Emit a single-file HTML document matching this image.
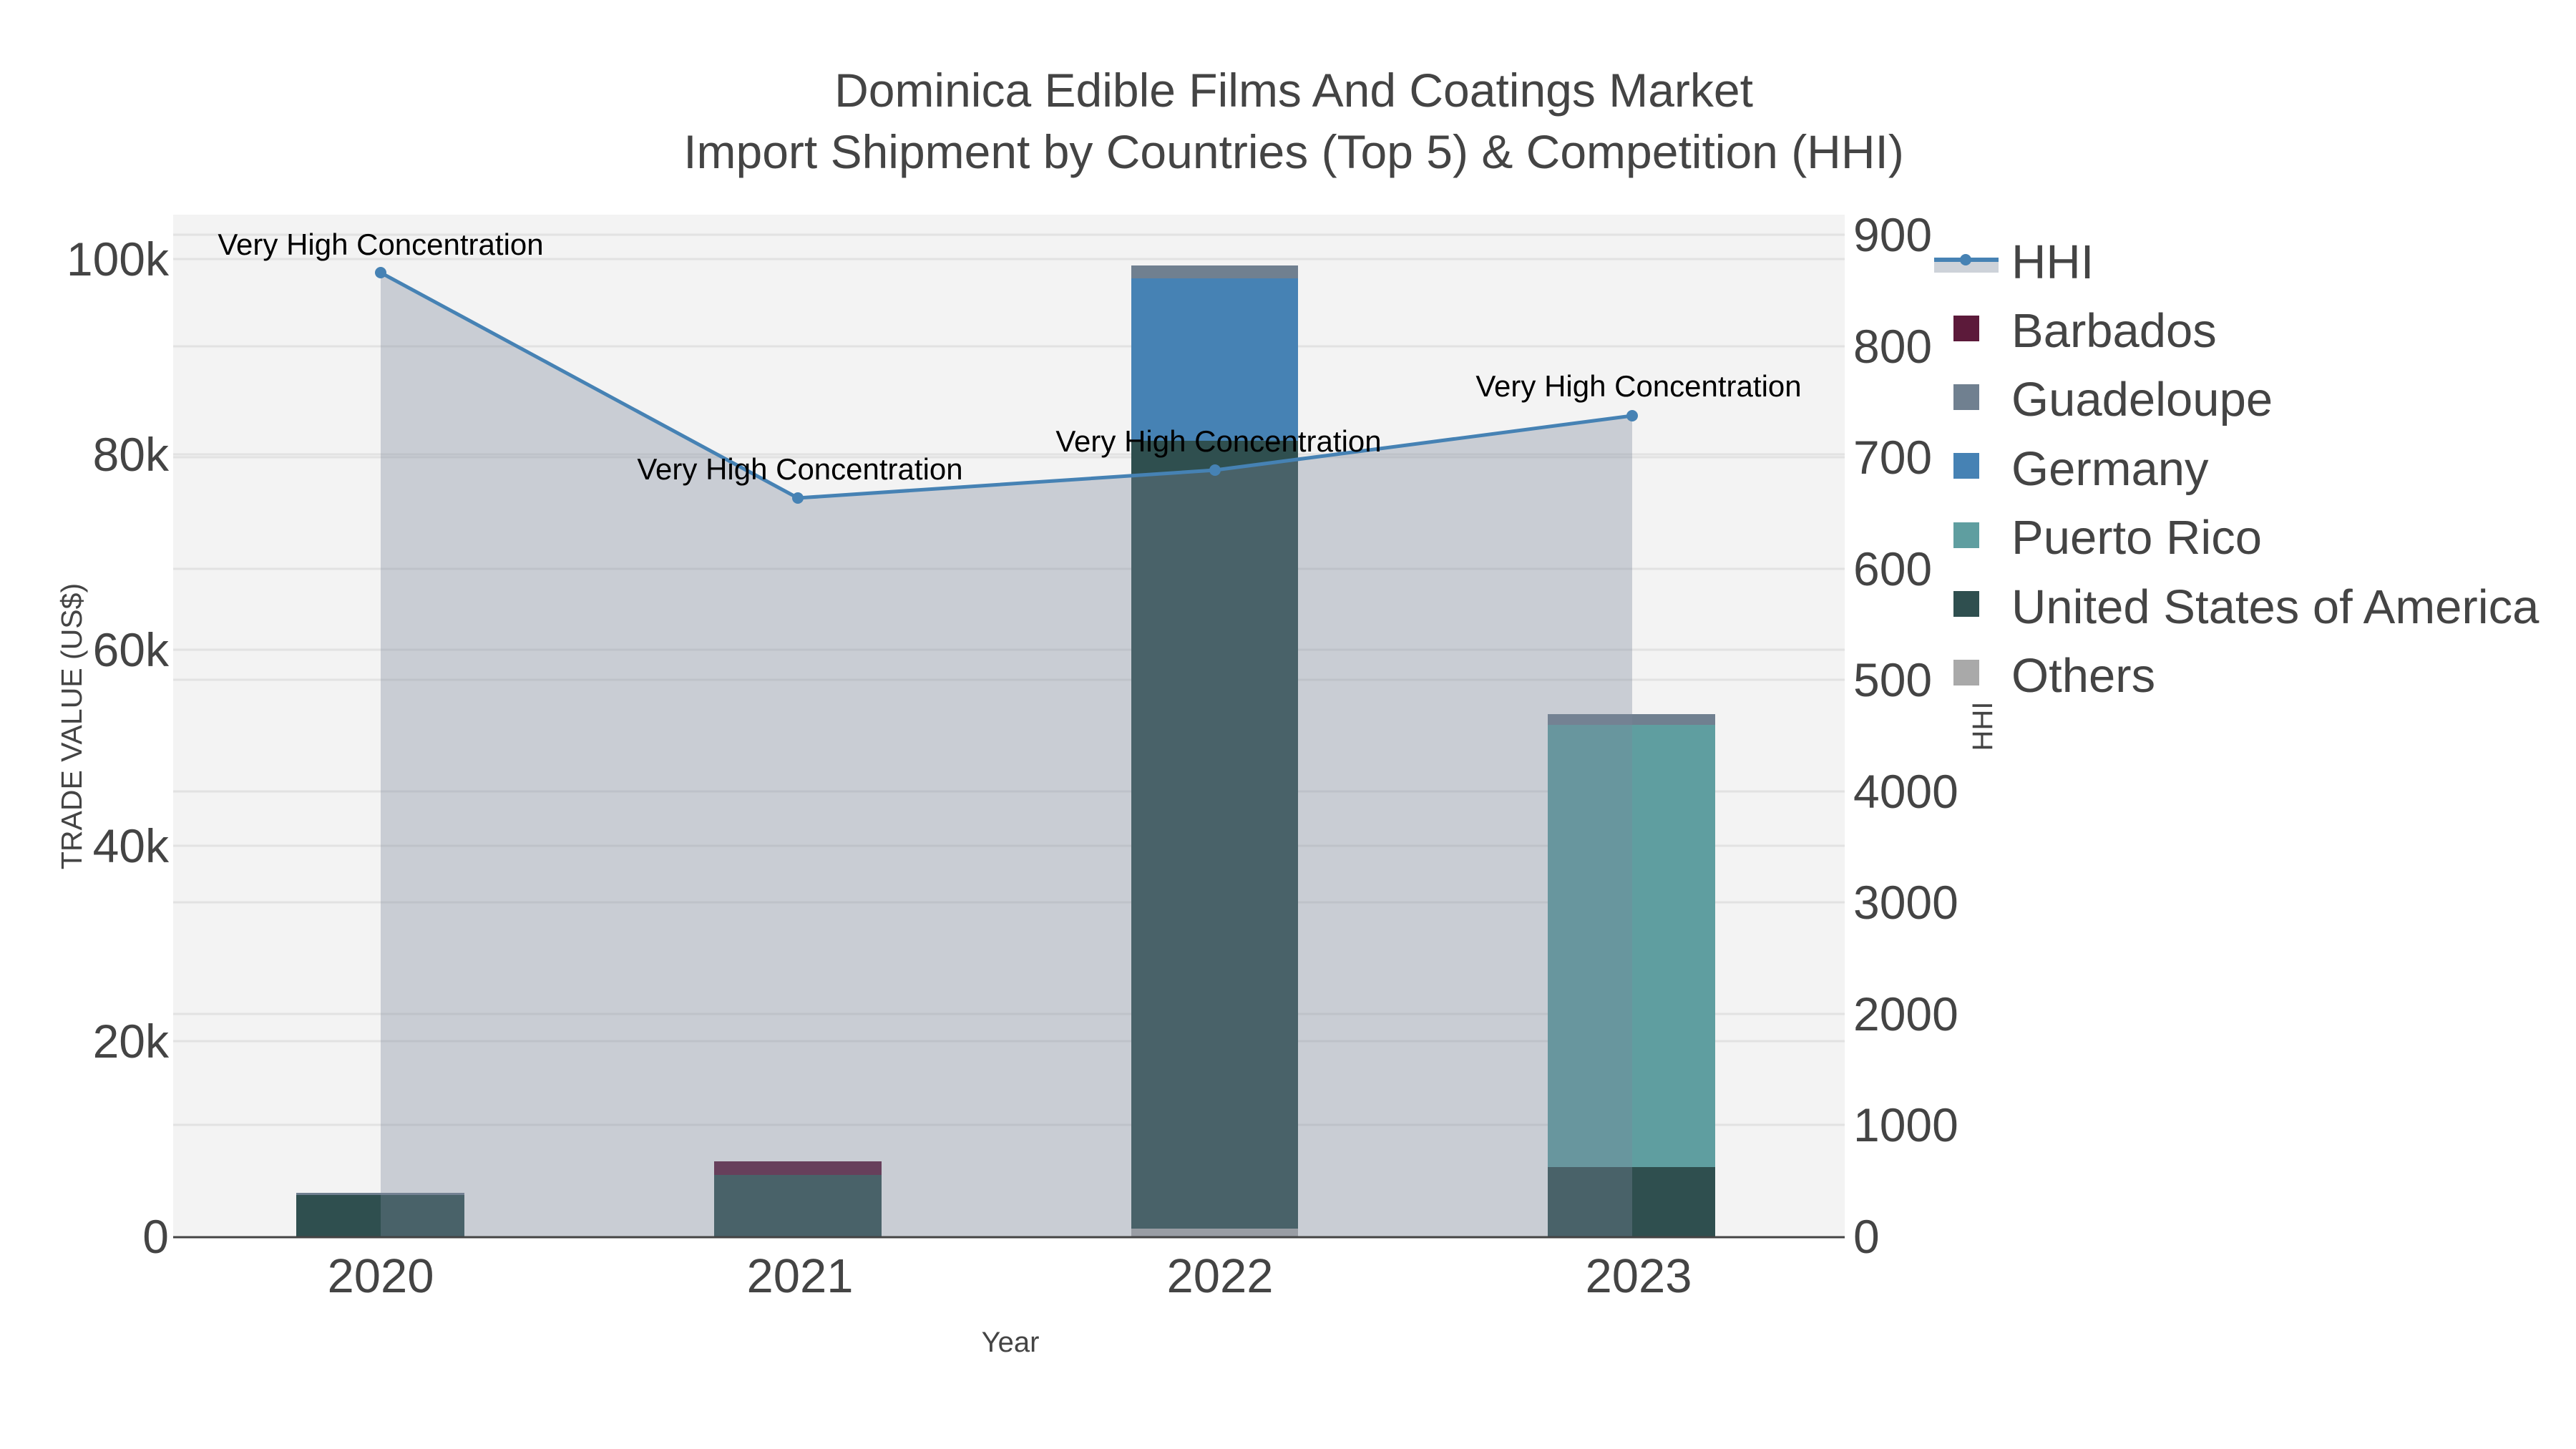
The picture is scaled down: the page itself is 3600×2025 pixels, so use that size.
<!DOCTYPE html>
<html><head><meta charset="utf-8"><style>
html,body{margin:0;padding:0;background:#fff;}
svg{display:block;font-family:"Liberation Sans",sans-serif;}
</style></head><body>
<svg width="3600" height="2025" viewBox="0 0 3600 2025" xmlns="http://www.w3.org/2000/svg">
<rect width="3600" height="2025" fill="#fff"/>
<rect x="242" y="300" width="2336" height="1428" fill="#f3f3f3"/>
<g stroke="#e2e2e2" stroke-width="3">
<line x1="242" x2="2578" y1="1455" y2="1455"/>
<line x1="242" x2="2578" y1="1182" y2="1182"/>
<line x1="242" x2="2578" y1="908" y2="908"/>
<line x1="242" x2="2578" y1="635" y2="635"/>
<line x1="242" x2="2578" y1="362" y2="362"/>
<line x1="242" x2="2578" y1="1572" y2="1572"/>
<line x1="242" x2="2578" y1="1417" y2="1417"/>
<line x1="242" x2="2578" y1="1261" y2="1261"/>
<line x1="242" x2="2578" y1="1106" y2="1106"/>
<line x1="242" x2="2578" y1="950" y2="950"/>
<line x1="242" x2="2578" y1="795" y2="795"/>
<line x1="242" x2="2578" y1="639" y2="639"/>
<line x1="242" x2="2578" y1="484" y2="484"/>
<line x1="242" x2="2578" y1="328" y2="328"/>
</g>
<rect x="414" y="1667" width="235" height="61" fill="#708090"/>
<rect x="414" y="1670" width="235" height="58" fill="#2f4f4f"/>
<rect x="998" y="1623" width="234" height="105" fill="#5c1a3a"/>
<rect x="998" y="1642" width="234" height="86" fill="#2f4f4f"/>
<rect x="1581" y="371" width="233" height="1357" fill="#708090"/>
<rect x="1581" y="389" width="233" height="1339" fill="#4682b4"/>
<rect x="1581" y="616" width="233" height="1112" fill="#2f4f4f"/>
<rect x="1581" y="1717" width="233" height="11" fill="#a9a9a9"/>
<rect x="2163" y="998" width="234" height="730" fill="#708090"/>
<rect x="2163" y="1013" width="234" height="715" fill="#5f9ea0"/>
<rect x="2163" y="1631" width="234" height="97" fill="#2f4f4f"/>
<polygon points="532,381 1115,696 1698,657 2281,581 2281,1728 532,1728" fill="rgba(122,134,154,0.35)"/>
<line x1="242" x2="2578" y1="1729" y2="1729" stroke="#444" stroke-width="3"/>
<polyline points="532,381 1115,696 1698,657 2281,581" fill="none" stroke="#4682b4" stroke-width="5"/>
<g fill="#4682b4"><circle cx="532" cy="381" r="8"/><circle cx="1115" cy="696" r="8"/><circle cx="1698" cy="657" r="8"/><circle cx="2281" cy="581" r="8"/></g>
<g font-size="42" fill="#000" text-anchor="middle">
<text x="532" y="356">Very High Concentration</text>
<text x="1118" y="670">Very High Concentration</text>
<text x="1703" y="631">Very High Concentration</text>
<text x="2290" y="554">Very High Concentration</text>
</g>
<g font-size="66" fill="#444" text-anchor="middle">
<text x="1808" y="149">Dominica Edible Films And Coatings Market</text>
<text x="1808" y="235">Import Shipment by Countries (Top 5) &amp; Competition (HHI)</text>
</g>
<g font-size="66" fill="#444" text-anchor="end">
<text x="236" y="1751">0</text>
<text x="236" y="1478">20k</text>
<text x="236" y="1205">40k</text>
<text x="236" y="931">60k</text>
<text x="236" y="658">80k</text>
<text x="236" y="385">100k</text>
</g>
<g font-size="66" fill="#444">
<text x="2590" y="1751">0</text>
<text x="2590" y="1595">1000</text>
<text x="2590" y="1440">2000</text>
<text x="2590" y="1284">3000</text>
<text x="2590" y="1129">4000</text>
<text x="2590" y="973">500</text>
<text x="2590" y="818">600</text>
<text x="2590" y="662">700</text>
<text x="2590" y="507">800</text>
<text x="2590" y="351">900</text>
</g>
<g font-size="67" fill="#444" text-anchor="middle">
<text x="532" y="1806">2020</text>
<text x="1118" y="1806">2021</text>
<text x="1705" y="1806">2022</text>
<text x="2290" y="1806">2023</text>
</g>
<text x="1412" y="1889" font-size="40" fill="#444" text-anchor="middle">Year</text>
<text transform="translate(114,1015) rotate(-90)" font-size="41" fill="#444" text-anchor="middle">TRADE VALUE (US$)</text>
<text transform="translate(2784,1015) rotate(-90)" font-size="40" fill="#444" text-anchor="middle">HHI</text>
<rect x="2703" y="363" width="90" height="18" fill="#cdd2d9"/>
<line x1="2703" x2="2793" y1="363" y2="363" stroke="#4682b4" stroke-width="6"/>
<circle cx="2747" cy="363" r="8" fill="#4682b4"/>
<rect x="2730" y="441" width="36" height="36" fill="#5c1a3a"/>
<rect x="2730" y="537" width="36" height="36" fill="#708090"/>
<rect x="2730" y="633" width="36" height="36" fill="#4682b4"/>
<rect x="2730" y="730" width="36" height="36" fill="#5f9ea0"/>
<rect x="2730" y="826" width="36" height="36" fill="#2f4f4f"/>
<rect x="2730" y="922" width="36" height="36" fill="#a9a9a9"/>
<g font-size="67" fill="#444">
<text x="2811" y="389">HHI</text>
<text x="2811" y="485">Barbados</text>
<text x="2811" y="581">Guadeloupe</text>
<text x="2811" y="678">Germany</text>
<text x="2811" y="774">Puerto Rico</text>
<text x="2811" y="871">United States of America</text>
<text x="2811" y="967">Others</text>
</g>
</svg>
</body></html>
